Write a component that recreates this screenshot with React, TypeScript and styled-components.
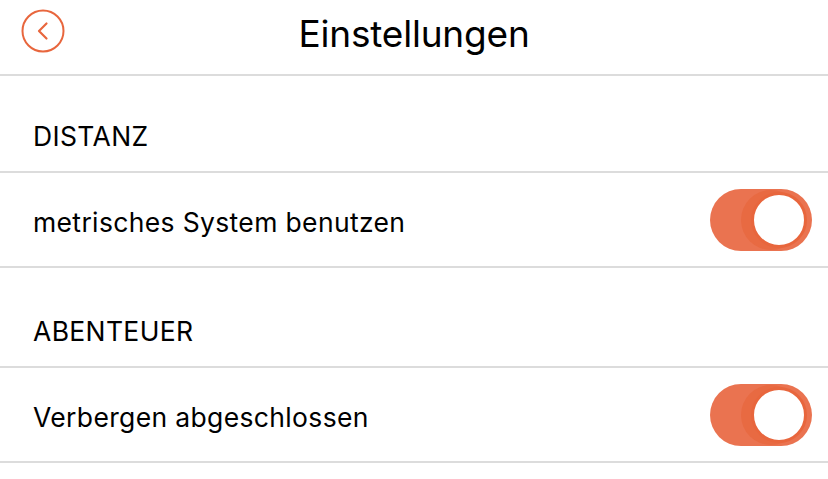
import styled, { createGlobalStyle } from "styled-components"
import { useState } from "react"

const GlobalStyle = createGlobalStyle`
  body {
    margin: 0;
    background: #ffffff;
    font-family: "Inter", "Liberation Sans", sans-serif;
    color: #000000;
  }
`

type SettingProps = {
  label: string
  value: boolean
  onToggle: () => void
}

const SettingRow = ({ label, value, onToggle }: SettingProps) => (
  <Row>
    <RowLabel>{label}</RowLabel>
    <Switch $on={value} onClick={onToggle} aria-pressed={value}>
      <Knob $on={value} />
    </Switch>
  </Row>
)

const App = () => {
  const [metric, setMetric] = useState(true)
  const [hideDone, setHideDone] = useState(true)

  return (
    <Page>
      <GlobalStyle />
      <Header>
        <BackButton aria-label="Zurück">
          <svg width="44" height="44" viewBox="0 0 44 44" fill="none">
            <circle cx="22" cy="22" r="20.5" stroke="#e8663d" strokeWidth="2" />
            <path d="M25.5 14.5 L18 22 L25.5 29.5" stroke="#e8663d" strokeWidth="2.2" strokeLinecap="round" strokeLinejoin="round" />
          </svg>
        </BackButton>
        <Title>Einstellungen</Title>
      </Header>

      <SectionTitle $height={97}>DISTANZ</SectionTitle>
      <SettingRow label="metrisches System benutzen" value={metric} onToggle={() => setMetric(!metric)} />

      <SectionTitle $height={100}>ABENTEUER</SectionTitle>
      <SettingRow label="Verbergen abgeschlossen" value={hideDone} onToggle={() => setHideDone(!hideDone)} />
    </Page>
  )
}

export default App

const Page = styled.div`
  width: 828px;
  min-height: 479px;
  background: #ffffff;
`

const Header = styled.header`
  position: relative;
  display: flex;
  align-items: center;
  justify-content: center;
  height: 74px;
  border-bottom: 2px solid #dcdcdc;
`

const BackButton = styled.button`
  position: absolute;
  left: 21px;
  top: 9px;
  padding: 0;
  border: none;
  background: transparent;
  display: flex;
  cursor: pointer;
`

const Title = styled.h1`
  margin: 0;
  margin-top: -7px;
  font-size: 37px;
  font-weight: 400;
  letter-spacing: -0.2px;
`

const SectionTitle = styled.div<{ $height: number }>`
  display: flex;
  align-items: flex-end;
  height: ${(p) => p.$height}px;
  padding: 0 33px 19px;
  box-sizing: border-box;
  font-size: 26.5px;
  letter-spacing: 0.35px;
  border-bottom: 2px solid #dcdcdc;
`

const Row = styled.div`
  display: flex;
  align-items: center;
  justify-content: space-between;
  height: 93px;
  padding: 0 16px 0 33px;
  border-bottom: 2px solid #dcdcdc;
`

const RowLabel = styled.span`
  padding-top: 4px;
  font-size: 26.5px;
  letter-spacing: 0.35px;
`

const Switch = styled.button<{ $on: boolean }>`
  position: relative;
  width: 102px;
  height: 62px;
  padding: 0;
  border: none;
  border-radius: 31px;
  background: ${(p) => (p.$on ? "#ea7350" : "#e5e5ea")};
  cursor: pointer;
`

const Knob = styled.span<{ $on: boolean }>`
  position: absolute;
  top: 3px;
  left: ${(p) => (p.$on ? "41px" : "3px")};
  width: 50px;
  height: 50px;
  border-radius: 50%;
  background: #ffffff;
  border: 3px solid #e8663d;
  box-shadow: -8px 0 0 2px #e86a42;
`
